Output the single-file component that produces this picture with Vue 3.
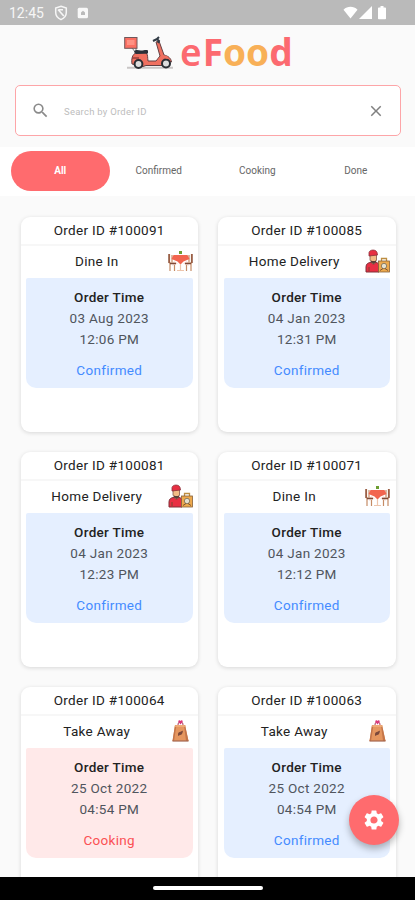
<template>
  <div class="screen">

    <!-- Status bar -->
    <div class="status-bar">
      <span class="clock">12:45</span>
      <svg class="icon-shield" viewBox="0 0 14 16">
        <path d="M7 1.2 12.3 3v4.6c0 3.2-2.2 5.7-5.3 7-3.1-1.3-5.3-3.8-5.3-7V3z" fill="none" stroke="#f6f6f6" stroke-width="1.5" />
        <path d="M4 4.500 9.800 11M5 4.800h4" fill="none" stroke="#f6f6f6" stroke-width="1.600" />
      </svg>
      <svg class="icon-app" viewBox="0 0 12 12">
        <rect x="0.7" y="0.7" width="10.3" height="10.6" rx="1.5" fill="#f8f8f8" />
        <path d="M4 8V5.500L6 3.700l2 1.800V8z" fill="#bababa" />
      </svg>
      <svg class="icon-signal" viewBox="0 0 46 16">
        <path d="M0.5 4.7C4.6 0.9 10.4 0.9 14.5 4.7L7.500 13.500z" fill="#fff" />
        <path d="M29 1v13H16z" fill="#fff" />
        <path d="M37.500 1h3v1.500h1.700c.5 0 .8.300.8.800v10.200c0 .5-.3.800-.8.800h-6.400c-.5 0-.8-.3-.8-.8V3.300c0-.5.300-.8.800-.8h1.700z" fill="#fff" />
      </svg>
    </div>

    <!-- Logo -->
    <header class="brand">
      <svg class="scooter" viewBox="0 0 50 34">
        <path d="M3 31.800h46" stroke="#c9c6c6" stroke-width="2" />
        <path d="M8 12l4 5M12 11v5" stroke="#777" stroke-width="1" />
        <rect x="0.7" y="1.5" width="12.3" height="10.8" fill="#fb6f62" stroke="#70585b" stroke-width="1" />
        <rect x="3" y="4" width="7.5" height="5" fill="#ff9183" />
        <path d="M8 28c-.8-5 .4-10 4-11h10c2 1 1.500 5 2 8h8l4-5-4-14 3-1 5 14c4 1 7 3 7.500 7l-4-.5-4 4H22l-3 1z" fill="#ef7060" stroke="#633f42" stroke-width="1" />
        <path d="M10 16c1-3 4-2 7-1.500 3 0 5-1 7 0v3l-12 .5z" fill="#293039" />
        <path d="M29 5l4-2 2 2-1 2M33 3l2-2" fill="none" stroke="#303a44" stroke-width="2" />
        <circle cx="14.5" cy="28" r="3.9" fill="#ddd" stroke="#292d33" stroke-width="2" />
        <circle cx="42" cy="27.5" r="4" fill="#ddd" stroke="#292d33" stroke-width="2" />
        <path d="M34 27c1-5 5-8 10-5" fill="none" stroke="#ef7060" stroke-width="2.5" />
        <path d="M8 22h7" stroke="#963f3c" stroke-width="1.5" />
      </svg>
      <span class="brand-name"><span class="thin">e</span>F<span class="orange">oo</span>d</span>
    </header>

    <!-- Search -->
    <div class="search-box">
      <svg class="icon-search" viewBox="0 0 24 24">
        <path fill="#8a8a8a" d="M15.500 14h-.79l-.28-.27A6.471 6.471 0 0 0 16 9.500 6.500 6.500 0 1 0 9.500 16c1.610 0 3.090-.59 4.230-1.570l.27.280v.79l5 4.990L20.490 19l-4.990-5zm-6 0C7.010 14 5 11.990 5 9.500S7.010 5 9.500 5 14 7.010 14 9.500 11.990 14 9.500 14z" />
      </svg>
      <span class="search-hint">Search by Order ID</span>
      <svg class="icon-close" viewBox="0 0 24 24">
        <path fill="#808080" d="M19 6.410 17.590 5 12 10.590 6.410 5 5 6.410 10.590 12 5 17.590 6.410 19 12 13.410 17.590 19 19 17.590 13.410 12z" />
      </svg>
    </div>

    <!-- Tabs -->
    <nav class="tabs">
      <div v-for="tab in tabs" :key="tab"
           :class="['tab-item', activeTab === tab ? 'tab-active' : '']"
           @click="activeTab = tab">
        {{ tab }}
      </div>
    </nav>

    <!-- Orders -->
    <main class="orders">
      <article v-for="order in visibleOrders" :key="order.id" class="order-card">
        <div class="order-id">Order ID #{{ order.id }}</div>
        <div class="order-type">
          <span class="type-name">{{ order.type }}</span>
          <svg v-if="order.type === 'Dine In'" class="type-icon" viewBox="0 0 25 24">
            <path d="M12.500 5V2" stroke="#6d9e32" stroke-width="3" />
            <path d="M1.500 5v9h5v8M2 14v8M4 6v7M23.500 5v9h-5v8M23 14v8M21 6v7" fill="none" stroke="#c58b65" stroke-width="1.2" />
            <path d="M1 5v9M24 5v9" stroke="#8a4d37" stroke-width="1.4" />
            <path d="M6 12l-2 5 6-2.500zM19 12l2 5-6-2.500z" fill="#f7ded7" />
            <path d="M5.500 6h14l2 4-6 2.500-3 3-3-3-6-2.500z" fill="#f2654f" />
            <path d="M12.500 15v6M9 21.500h7" stroke="#edc5ad" stroke-width="1.2" />
            <path d="M2 14.500h6M17 14.500h6" stroke="#804a37" stroke-width="1.3" />
          </svg>
          <svg v-else-if="order.type === 'Home Delivery'" class="type-icon" viewBox="0 0 25 24">
            <path d="M1 23v-5c0-3 2-4.500 5-4.500h5c2 0 3 2 3 4V23z" fill="#e92f43" stroke="#803039" stroke-width="1" />
            <path d="M5 5h6.500v6L9.500 15h-2L5 11z" fill="#f2bc86" stroke="#70443a" stroke-width=".7" />
            <path d="M4 7V3.500C4.500.5 11 0 12 3.500L12.500 6z" fill="#e72f42" stroke="#89303a" stroke-width=".8" />
            <path d="M6 11.500c1.500.8 3.500.8 5 0v1.500L8.500 15 6 13z" fill="#5b4038" />
            <path d="M16.500 12V9.500h5V12" fill="none" stroke="#bd8e42" stroke-width="1.3" />
            <rect x="13.5" y="12" width="11" height="11" fill="#eda94c" stroke="#85603b" stroke-width=".8" />
            <circle cx="19" cy="17" r="2.7" fill="#e6e0ce" stroke="#786950" stroke-width=".8" />
            <path d="M15 21.500l3-2M23 21.500l-3-2M4 18v4" stroke="#704932" stroke-width=".9" />
          </svg>
          <svg v-else class="type-icon" viewBox="0 0 25 24">
            <path d="M10 6c0-4 5-4 5 0" fill="none" stroke="#bd627c" stroke-width="1.2" />
            <path d="M12.500 5.500 10.300 2.800C10 1 12 .7 12.500 2c.5-1.300 2.500-1 2.200.8z" fill="#db397a" />
            <path d="M7 6h10l3.500 16H4.500z" fill="#e5965f" />
            <path d="M7 6 4.500 22H6L8.500 6zM17 6l3.500 16H18L16 6z" fill="#c47549" />
            <path d="M7 7h10.500" stroke="#f0b17c" stroke-width="1.5" />
            <path d="M10 15.500c0-3 3-2.500 5-4-.3 2.500-1 4.500-3 4.500l-2 1z" fill="#7c493b" />
            <path d="M4.500 22h16" stroke="#a46650" stroke-width="1.2" />
          </svg>
        </div>
        <div :class="['order-body', 'status-' + order.status.toLowerCase()]">
          <div class="time-title">Order Time</div>
          <div class="time-line">{{ order.date }}</div>
          <div class="time-line">{{ order.time }}</div>
          <div class="order-status">{{ order.status }}</div>
        </div>
      </article>
    </main>

    <!-- Settings button floats over the list -->
    <button class="fab" aria-label="Settings">
      <svg viewBox="0 0 24 24">
        <path fill="#fff" d="M19.140 12.940c.04-.3.060-.61.060-.94 0-.32-.02-.64-.07-.94l2.030-1.580a.49.490 0 0 0 .12-.61l-1.920-3.320a.488.488 0 0 0-.59-.22l-2.390.96c-.5-.38-1.030-.7-1.620-.94l-.36-2.540a.484.484 0 0 0-.48-.41h-3.840c-.24 0-.43.170-.47.410l-.36 2.540c-.59.240-1.130.570-1.620.940l-2.390-.96c-.22-.08-.47 0-.59.220L2.740 8.870c-.12.210-.08.470.12.610l2.030 1.580c-.05.300-.09.630-.09.940s.02.640.07.940l-2.030 1.580a.49.490 0 0 0-.12.610l1.920 3.320c.12.220.37.290.59.220l2.390-.96c.5.380 1.030.7 1.620.940l.36 2.540c.05.240.240.410.480.410h3.840c.24 0 .44-.17.470-.41l.36-2.540c.59-.24 1.130-.56 1.620-.94l2.390.96c.22.080.47 0 .59-.22l1.920-3.320c.12-.22.070-.47-.12-.61l-2.010-1.580zM12 15.600A3.610 3.610 0 0 1 8.400 12c0-1.980 1.620-3.600 3.600-3.600s3.600 1.620 3.600 3.600-1.620 3.600-3.600 3.600z" />
      </svg>
    </button>

    <div class="nav-bar"><span class="nav-handle"></span></div>
  </div>
</template>

<script setup>
import { ref, computed } from 'vue';

const tabs = ['All', 'Confirmed', 'Cooking', 'Done'];
const activeTab = ref('All');

const orders = [
  { id: '100091', type: 'Dine In', date: '03 Aug 2023', time: '12:06 PM', status: 'Confirmed' },
  { id: '100085', type: 'Home Delivery', date: '04 Jan 2023', time: '12:31 PM', status: 'Confirmed' },
  { id: '100081', type: 'Home Delivery', date: '04 Jan 2023', time: '12:23 PM', status: 'Confirmed' },
  { id: '100071', type: 'Dine In', date: '04 Jan 2023', time: '12:12 PM', status: 'Confirmed' },
  { id: '100064', type: 'Take Away', date: '25 Oct 2022', time: '04:54 PM', status: 'Cooking' },
  { id: '100063', type: 'Take Away', date: '25 Oct 2022', time: '04:54 PM', status: 'Confirmed' }
];

const visibleOrders = computed(() =>
  activeTab.value === 'All' ? orders : orders.filter((o) => o.status === activeTab.value)
);
</script>

<style>
body {
  margin: 0;
}
</style>

<style scoped>
.screen {
  position: relative;
  display: flex;
  flex-direction: column;
  width: 415px;
  height: 900px;
  overflow: hidden;
  background: #fafafa;
  font-family: Roboto, sans-serif;
  color: #222;
}

.status-bar {
  display: flex;
  align-items: center;
  flex: none;
  height: 25px;
  padding: 0 26px 0 9px;
  box-sizing: border-box;
  background: #bababa;
}

.clock {
  width: 45px;
  font-size: 14px;
  color: #f6f6f6;
}

.icon-shield {
  width: 14px;
  height: 16px;
}

.icon-app {
  width: 12px;
  height: 12px;
  margin-left: 9px;
}

.icon-signal {
  width: 46px;
  height: 16px;
  margin-left: auto;
}

.brand {
  display: flex;
  flex: none;
  height: 60px;
  padding-left: 124px;
}

.scooter {
  width: 50px;
  height: 34px;
  margin-top: 11px;
}

.brand-name {
  margin-left: 6px;
  font-family: "Noto Sans", sans-serif;
  font-size: 37px;
  line-height: 53px;
  font-weight: 700;
  color: #fc6a70;
}

.thin {
  margin-right: 1px;
  font-weight: 600;
}

.orange {
  color: #f8b057;
}

.search-box {
  display: flex;
  align-items: center;
  flex: none;
  height: 51px;
  margin: 0 14px 0 15px;
  padding: 0 15px;
  box-sizing: border-box;
  border: 1.5px solid #fda5a8;
  border-radius: 5px;
  background: #fff;
}

.icon-search {
  width: 19px;
  height: 19px;
}

.search-hint {
  flex: 1;
  margin-left: 14px;
  padding-top: 2px;
  font-size: 9.5px;
  letter-spacing: 0.25px;
  color: #bdbdbd;
}

.icon-close {
  width: 18px;
  height: 18px;
}

.tabs {
  display: flex;
  flex: none;
  height: 49px;
  margin-top: 11px;
  padding: 4px 10px 5px 11px;
  box-sizing: border-box;
  background: #fff;
}

.tab-item {
  flex: 1;
  line-height: 39px;
  border-radius: 20px;
  font-size: 10px;
  text-align: center;
  color: #666;
  cursor: pointer;
}

.tab-active {
  background: #ff6b6e;
  font-weight: 700;
  color: #fff;
}

.orders {
  display: grid;
  flex: 1;
  min-height: 0;
  grid-template-columns: 177.5px 177.5px;
  grid-auto-rows: 215px;
  gap: 20px;
  padding: 21px 0 0 20.5px;
  overflow: hidden;
}

.order-card {
  border-radius: 9px;
  background: #fff;
  box-shadow: 0 1px 4px rgba(0, 0, 0, 0.14);
}

.order-id {
  height: 27px;
  border-bottom: 2px solid #f7f7f7;
  font-size: 13.5px;
  line-height: 27px;
  letter-spacing: 0.3px;
  text-align: center;
}

.order-type {
  display: flex;
  align-items: center;
  height: 32px;
  padding: 0 5.5px 2px;
  box-sizing: border-box;
}

.type-name {
  flex: 1;
  font-size: 13.5px;
  letter-spacing: 0.3px;
  text-align: center;
}

.type-icon {
  width: 25px;
  height: 24px;
}

.order-body {
  height: 110px;
  margin: 0 5.5px;
  padding-top: 9px;
  box-sizing: border-box;
  border-radius: 2px 2px 10px 10px;
  font-size: 13.5px;
  line-height: 21px;
  letter-spacing: 0.3px;
  text-align: center;
}

.time-title {
  font-weight: 500;
}

.time-line {
  color: #50555d;
}

.order-status {
  margin-top: 10px;
}

.status-confirmed {
  background: #e5efff;
}

.status-confirmed .order-status {
  color: #448bff;
}

.status-cooking {
  background: #ffe9e9;
}

.status-cooking .order-status {
  color: #fb5054;
}

.fab {
  position: absolute;
  right: 16px;
  bottom: 55px;
  display: flex;
  align-items: center;
  justify-content: center;
  width: 50px;
  height: 50px;
  padding: 0;
  border: 0;
  border-radius: 50%;
  background: #ff6b6e;
  box-shadow: 0 4px 7px rgba(0, 0, 0, 0.28);
}

.fab svg {
  width: 24px;
  height: 24px;
}

.nav-bar {
  display: flex;
  flex: none;
  justify-content: center;
  height: 23px;
  background: #000;
}

.nav-handle {
  width: 110px;
  height: 4px;
  margin-top: 9px;
  border-radius: 2px;
  background: #fff;
}
</style>
